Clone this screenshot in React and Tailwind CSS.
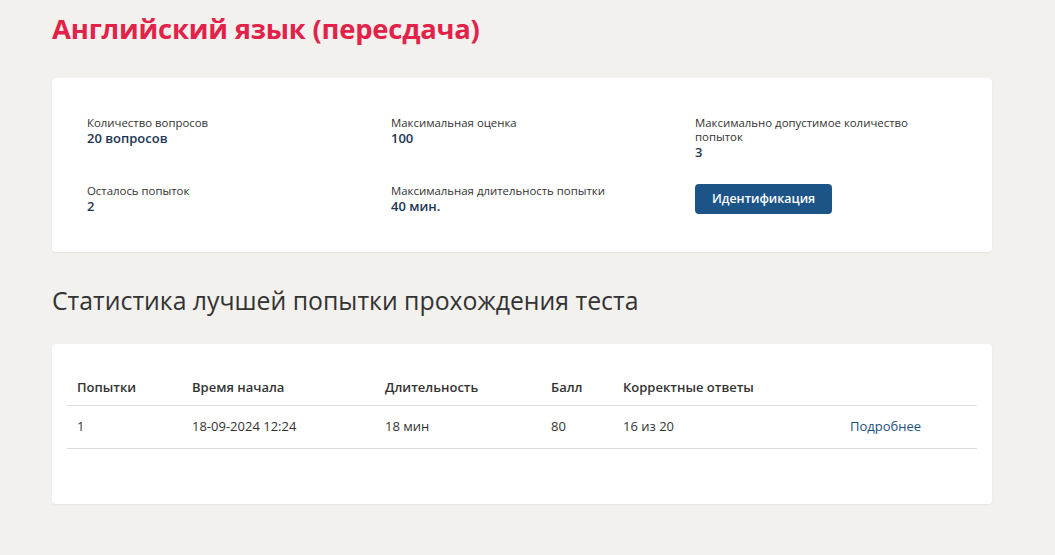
import React from "react";

const info = [
  { label: "Количество вопросов", value: "20 вопросов" },
  { label: "Максимальная оценка", value: "100" },
  { label: "Максимально допустимое количество попыток", value: "3" },
  { label: "Осталось попыток", value: "2" },
  { label: "Максимальная длительность попытки", value: "40 мин." },
];

const attempts = [
  { n: "1", start: "18-09-2024 12:24", dur: "18 мин", score: "80", correct: "16 из 20" },
];

const InfoItem = ({ label, value }) => (
  <div className="flex flex-col">
    <span className="text-[11.4px] leading-[14px] text-[#333333] max-w-[225px]">{label}</span>
    <span className="text-[13px] leading-[16px] font-semibold text-[#1c3553]">{value}</span>
  </div>
);

const App = () => {
  return (
    <div className="min-h-[555px] bg-[#f2f1ee] pl-[52px] pr-[63px] pt-[11px] pb-[50px] font-['Open_Sans',sans-serif]">
      <div className="w-[940px]">
        <h1 className="text-[27.4px] leading-[36px] font-bold text-[#e32249] tracking-[-0.2px]">
          Английский язык (пересдача)
        </h1>

        <div className="mt-[31px] bg-white rounded-[4px] shadow-[0_1px_2px_rgba(0,0,0,0.06)] px-[35px] pt-[38px] pb-[38px]">
          <div className="grid grid-cols-[304px_304px_1fr] gap-y-[24px]">
            {info.slice(0, 3).map((i) => (
              <InfoItem key={i.label} {...i} />
            ))}
            {info.slice(3).map((i) => (
              <InfoItem key={i.label} {...i} />
            ))}
            <div>
              <button className="h-[30px] px-[17px] rounded-[4px] bg-[#1d5488] text-white text-[12.4px] font-semibold">
                Идентификация
              </button>
            </div>
          </div>
        </div>

        <h2 className="mt-[32px] text-[24.8px] leading-[32px] text-[#333333] font-normal">
          Статистика лучшей попытки прохождения теста
        </h2>

        <div className="mt-[28px] bg-white rounded-[4px] shadow-[0_1px_2px_rgba(0,0,0,0.06)] px-[15px] pt-[26px] pb-[55px]">
          <table className="w-full text-[13px] text-[#333333] border-collapse">
            <thead>
              <tr className="border-b border-[#dddddd] h-[35px]">
                <th className="w-[115px] text-left font-semibold px-[10px]">Попытки</th>
                <th className="w-[193px] text-left font-semibold px-[10px]">Время начала</th>
                <th className="w-[166px] text-left font-semibold px-[10px]">Длительность</th>
                <th className="w-[72px] text-left font-semibold px-[10px]">Балл</th>
                <th className="w-[227px] text-left font-semibold px-[10px]">Корректные ответы</th>
                <th className="text-left font-semibold px-[10px]"></th>
              </tr>
            </thead>
            <tbody>
              {attempts.map((a) => (
                <tr key={a.n} className="border-b border-[#dddddd] h-[43px]">
                  <td className="px-[10px]">{a.n}</td>
                  <td className="px-[10px]">{a.start}</td>
                  <td className="px-[10px]">{a.dur}</td>
                  <td className="px-[10px]">{a.score}</td>
                  <td className="px-[10px]">{a.correct}</td>
                  <td className="px-[10px]">
                    <a href="#" className="text-[#1d4f7f]">Подробнее</a>
                  </td>
                </tr>
              ))}
            </tbody>
          </table>
        </div>
      </div>
    </div>
  );
};

export default App;
